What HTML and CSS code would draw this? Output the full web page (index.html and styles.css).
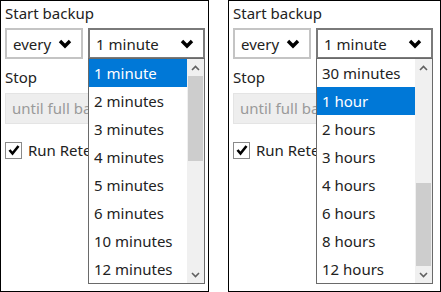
FILE: index.html
```html
<!DOCTYPE html>
<html lang="en">

<head>
    <meta charset="UTF-8">
    <title>Backup schedule</title>
    <link rel="stylesheet" href="styles.css">
</head>

<body>
    <div class="panel">
        <div class="label">Start backup</div>
        <div class="select-row">
            <div class="select select-every">
                <span>every</span>
                <svg class="chevron" width="14" height="10" viewBox="0 0 14 10"><polyline points="2,2 7,7 12,2" fill="none" stroke="#000" stroke-width="3.4"/></svg>
            </div>
            <div class="select select-open">
                <span>1 minute</span>
                <svg class="chevron" width="14" height="10" viewBox="0 0 14 10"><polyline points="2,2 7,7 12,2" fill="none" stroke="#000" stroke-width="3.4"/></svg>
            </div>
        </div>
        <div class="label label-stop">Stop</div>
        <div class="input-disabled">until full backup completed</div>
        <div class="check-row">
            <span class="checkbox">
                <svg width="14" height="14" viewBox="0 0 14 14"><polyline points="2.5,7 5.5,10.5 11.5,3" fill="none" stroke="#000" stroke-width="2.6"/></svg>
            </span>
            <span>Run Retention Policy</span>
        </div>

        <div class="dropdown">
            <ul class="options">
                <li class="selected">1 minute</li>
                <li>2 minutes</li>
                <li>3 minutes</li>
                <li>4 minutes</li>
                <li>5 minutes</li>
                <li>6 minutes</li>
                <li>10 minutes</li>
                <li>12 minutes</li>
            </ul>
            <div class="scrollbar">
                <div class="arrow">
                    <svg width="9" height="6" viewBox="0 0 9 6"><polyline points="1,5 4.5,1.5 8,5" fill="none" stroke="#606060" stroke-width="1.6"/></svg>
                </div>
                <div class="track">
                    <div class="thumb" style="top: 0px; height: 85px;"></div>
                </div>
                <div class="arrow">
                    <svg width="9" height="6" viewBox="0 0 9 6"><polyline points="1,1 4.5,4.5 8,1" fill="none" stroke="#606060" stroke-width="1.6"/></svg>
                </div>
            </div>
        </div>
    </div>

    <div class="panel panel-wide">
        <div class="label">Start backup</div>
        <div class="select-row">
            <div class="select select-every">
                <span>every</span>
                <svg class="chevron" width="14" height="10" viewBox="0 0 14 10"><polyline points="2,2 7,7 12,2" fill="none" stroke="#000" stroke-width="3.4"/></svg>
            </div>
            <div class="select select-open">
                <span>1 minute</span>
                <svg class="chevron" width="14" height="10" viewBox="0 0 14 10"><polyline points="2,2 7,7 12,2" fill="none" stroke="#000" stroke-width="3.4"/></svg>
            </div>
        </div>
        <div class="label label-stop">Stop</div>
        <div class="input-disabled">until full backup completed</div>
        <div class="check-row">
            <span class="checkbox">
                <svg width="14" height="14" viewBox="0 0 14 14"><polyline points="2.5,7 5.5,10.5 11.5,3" fill="none" stroke="#000" stroke-width="2.6"/></svg>
            </span>
            <span>Run Retention Policy</span>
        </div>

        <div class="dropdown">
            <ul class="options">
                <li>30 minutes</li>
                <li class="selected">1 hour</li>
                <li>2 hours</li>
                <li>3 hours</li>
                <li>4 hours</li>
                <li>6 hours</li>
                <li>8 hours</li>
                <li>12 hours</li>
            </ul>
            <div class="scrollbar">
                <div class="arrow">
                    <svg width="9" height="6" viewBox="0 0 9 6"><polyline points="1,5 4.5,1.5 8,5" fill="none" stroke="#606060" stroke-width="1.6"/></svg>
                </div>
                <div class="track">
                    <div class="thumb" style="top: 107px; height: 83px;"></div>
                </div>
                <div class="arrow">
                    <svg width="9" height="6" viewBox="0 0 9 6"><polyline points="1,1 4.5,4.5 8,1" fill="none" stroke="#606060" stroke-width="1.6"/></svg>
                </div>
            </div>
        </div>
    </div>
</body>

</html>
```

FILE: styles.css
```css
/* Reset and base */
* {
    margin: 0;
    padding: 0;
    box-sizing: border-box;
}

body {
    width: 441px;
    height: 292px;
    overflow: hidden;
    background: #ffffff;
    font-family: "Noto Sans", "Open Sans", sans-serif;
    font-size: 15px;
    color: #222222;
    display: flex;
    gap: 19px;
}

/* Panels */
.panel {
    position: relative;
    width: 209px;
    height: 292px;
    border: 1px solid #000000;
    padding: 1px 0 0 4px;
    overflow: hidden;
}

.panel-wide {
    width: 213px;
}

.label {
    height: 20px;
    line-height: 20px;
    margin-top: 1px;
    white-space: nowrap;
}

.label-stop {
    margin-top: 8px;
}

/* Selects */
.select-row {
    display: flex;
    gap: 5px;
    margin-top: 5px;
}

.select {
    height: 31px;
    display: flex;
    align-items: center;
    justify-content: space-between;
    padding: 0 9px 0 6px;
    border: 2px solid #c4c4c4;
    white-space: nowrap;
}

.select-every {
    width: 78px;
}

.select-open {
    width: 117px;
    border-color: #7a7a7a;
}

.chevron {
    display: block;
}

/* Disabled input */
.input-disabled {
    width: 196px;
    height: 31px;
    line-height: 29px;
    margin-top: 6px;
    padding: 0 6px;
    background: #eeeeee;
    border: 1px solid #e4e4e4;
    color: #9a9a9a;
    white-space: nowrap;
    overflow: hidden;
}

/* Checkbox */
.check-row {
    display: flex;
    align-items: center;
    gap: 6px;
    margin-top: 16px;
    white-space: nowrap;
}

.checkbox {
    width: 17px;
    height: 17px;
    border: 1px solid #8a8a8a;
    display: flex;
    align-items: center;
    justify-content: center;
    flex-shrink: 0;
}

/* Open dropdown list */
.dropdown {
    position: absolute;
    left: 87px;
    top: 57px;
    width: 117px;
    height: 226px;
    background: #ffffff;
    border: 1px solid #6a6a6a;
    display: flex;
}

.options {
    list-style: none;
    flex: 1;
}

.options li {
    height: 28px;
    line-height: 28px;
    padding-left: 5px;
    white-space: nowrap;
}

.options li.selected {
    background: #0078d7;
    color: #ffffff;
}

.scrollbar {
    width: 17px;
    display: flex;
    flex-direction: column;
    background: #f0f0f0;
}

.arrow {
    height: 17px;
    display: flex;
    align-items: center;
    justify-content: center;
}

.track {
    position: relative;
    flex: 1;
}

.thumb {
    position: absolute;
    left: 1px;
    right: 1px;
    background: #cdcdcd;
}
```
